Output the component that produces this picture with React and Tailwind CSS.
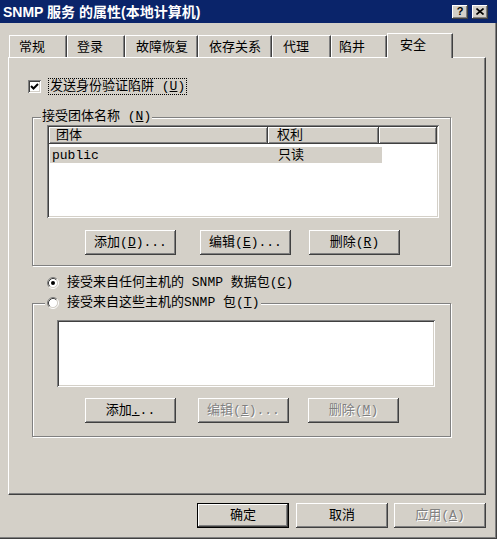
import React from 'react';

const FONT = "font-['Liberation_Mono','Noto_Sans_CJK_SC',monospace]";
const RAISED =
  'shadow-[inset_-1px_-1px_0_#404040,inset_1px_1px_0_#ffffff,inset_-2px_-2px_0_#808080]';
const SUNKEN =
  'shadow-[inset_1px_1px_0_#808080,inset_-1px_-1px_0_#ffffff,inset_2px_2px_0_#404040,inset_-2px_-2px_0_#d4d0c8]';
const ETCHED =
  'border border-[#808080] shadow-[inset_1px_1px_0_#ffffff,1px_1px_0_#ffffff]';

const U = ({ c }) => <span className="underline">{c}</span>;

const Btn = ({ children, def, disabled, className = '', w = 'w-[91px]' }) => (
  <div
    className={`${w} h-[25px] shrink-0 flex items-center justify-center bg-[#d4d0c8] leading-none ${RAISED} ${
      def ? 'border border-black' : ''
    } ${disabled ? 'text-[#808080] [text-shadow:1px_1px_0_#ffffff]' : ''} ${className}`}
  >
    {children}
  </div>
);

const Checkbox = () => (
  <div className={`w-[13px] h-[13px] bg-white shrink-0 flex items-center justify-center ${SUNKEN}`}>
    <svg width="9" height="9" viewBox="0 0 9 9">
      <path d="M1 4 L3.5 6.5 L8 2" stroke="#000" strokeWidth="2" fill="none" />
    </svg>
  </div>
);

const Radio = ({ checked }) => (
  <svg width="12" height="12" viewBox="0 0 12 12" className="shrink-0">
    <circle cx="6" cy="6" r="4.5" fill="#fff" />
    <path d="M2.11 9.89 A5.5 5.5 0 0 1 9.89 2.11" stroke="#808080" fill="none" />
    <path d="M9.89 2.11 A5.5 5.5 0 0 1 2.11 9.89" stroke="#ffffff" fill="none" />
    <path d="M2.82 9.18 A4.5 4.5 0 0 1 9.18 2.82" stroke="#404040" fill="none" />
    <path d="M9.18 2.82 A4.5 4.5 0 0 1 2.82 9.18" stroke="#d4d0c8" fill="none" />
    {checked && <circle cx="6" cy="6" r="2" fill="#000" />}
  </svg>
);

const tabs = [
  { label: '常规', w: 'w-[58px]', pl: 'pl-[9px]' },
  { label: '登录', w: 'w-[58px]', pl: 'pl-[9px]' },
  { label: '故障恢复', w: 'w-[73px]', pl: 'pl-[10px]' },
  { label: '依存关系', w: 'w-[74px]', pl: 'pl-[10px]' },
  { label: '代理', w: 'w-[59px]', pl: 'pl-[10px]' },
  { label: '陷井', w: 'w-[56px]', pl: 'pl-[7px]' },
];

const App = () => {
  return (
    <div
      className={`w-[497px] h-[539px] bg-[#d4d0c8] overflow-hidden flex flex-col text-[13px] text-black ${FONT} shadow-[inset_-1px_-1px_0_#404040,inset_-2px_-2px_0_#808080]`}
    >
      {/* Title bar */}
      <div className="h-[23px] shrink-0 bg-[#0a246a] flex items-center pl-[3px] pr-[9px]">
        <span className="text-white font-bold text-[14px] leading-none font-['Liberation_Sans','Noto_Sans_CJK_SC',sans-serif]">
          SNMP 服务 的属性(本地计算机)
        </span>
        <div className="ml-auto flex gap-[4px]">
          <div className={`w-[16px] h-[14px] bg-[#d4d0c8] flex items-center justify-center ${RAISED}`}>
            <span className="text-[11px] font-bold leading-none font-['Liberation_Sans',sans-serif]">?</span>
          </div>
          <div className={`w-[16px] h-[14px] bg-[#d4d0c8] flex items-center justify-center ${RAISED}`}>
            <svg width="8" height="7" viewBox="0 0 8 7">
              <path d="M0.5 0.5 L7.5 6.5 M7.5 0.5 L0.5 6.5" stroke="#000" strokeWidth="1.6" />
            </svg>
          </div>
        </div>
      </div>

      {/* Tabs */}
      <div className="mt-[10px] ml-[9px] h-[24px] flex items-end shrink-0">
        {tabs.map((t) => (
          <div
            key={t.label}
            className={`${t.w} ${t.pl} h-[22px] pt-[1px] flex items-center bg-[#d4d0c8] border-t border-l border-white border-r border-r-[#404040] shadow-[inset_-1px_0_0_#808080] leading-none`}
          >
            {t.label}
          </div>
        ))}
        <div className="relative z-10 w-[66px] pl-[12px] pb-[2px] h-[25px] -mb-px flex items-center bg-[#d4d0c8] border-t border-l border-white border-r border-r-[#404040] shadow-[inset_-1px_0_0_#808080] leading-none">
          安全
        </div>
      </div>

      {/* Panel */}
      <div className="ml-[8px] w-[478px] h-[438px] shrink-0 border border-white border-r-[#404040] border-b-[#404040] shadow-[inset_-1px_-1px_0_#808080] pl-[19px] flex flex-col">
        <div className="mt-[20px] h-[17px] flex items-center gap-[7px]">
          <Checkbox />
          <span className="border border-dotted border-black px-[1px] h-[17px] flex items-center leading-none">
            发送身份验证陷阱 (<U c="U" />)
          </span>
        </div>

        {/* Group 1 */}
        <div className={`relative mt-[22px] ml-[4px] w-[419px] h-[149px] pl-[14px] pt-[7px] flex flex-col ${ETCHED}`}>
          <span className="absolute left-[8px] -top-[9px] px-[1px] bg-[#d4d0c8] leading-[15px]">
            接受团体名称 (<U c="N" />)
          </span>
          <div className={`w-[392px] h-[93px] bg-white p-[2px] flex flex-col ${SUNKEN}`}>
            <div className="h-[17px] flex shrink-0 bg-[#d4d0c8]">
              <div className={`w-[219px] pl-[7px] flex items-center leading-none ${RAISED}`}>团体</div>
              <div className={`w-[111px] pl-[9px] flex items-center leading-none ${RAISED}`}>权利</div>
              <div className={`flex-1 ${RAISED}`} />
            </div>
            <div className="mt-[3px] ml-[1px] w-[332px] h-[16px] bg-[#d4d0c8] flex items-center leading-none">
              <span className="w-[218px] pl-[2px]">public</span>
              <span className="pl-[10px]">只读</span>
            </div>
          </div>
          <div className="mt-[12px] flex">
            <Btn className="ml-[38px]">
              添加(<U c="D" />)...
            </Btn>
            <Btn className="ml-[24px]">
              编辑(<U c="E" />)...
            </Btn>
            <Btn className="ml-[18px]">
              删除(<U c="R" />)
            </Btn>
          </div>
        </div>

        {/* Radio 1 */}
        <div className="mt-[8px] ml-[19px] h-[17px] flex items-center gap-[8px] leading-none">
          <Radio checked />
          <span>
            接受来自任何主机的 SNMP 数据包(<U c="C" />)
          </span>
        </div>

        {/* Group 2 */}
        <div className={`relative mt-[12px] ml-[4px] w-[419px] h-[134px] pl-[24px] pt-[16px] flex flex-col ${ETCHED}`}>
          <div className="absolute left-[12px] -top-[9px] px-[2px] h-[15px] bg-[#d4d0c8] flex items-center gap-[8px] leading-none">
            <Radio />
            <span>
              接受来自这些主机的SNMP 包(<U c="T" />)
            </span>
          </div>
          <div className={`w-[378px] h-[67px] bg-white ${SUNKEN}`} />
          <div className="mt-[11px] flex">
            <Btn className="ml-[28px]">
              添加<U c="." />..
            </Btn>
            <Btn className="ml-[22px]" disabled>
              编辑(<U c="I" />)...
            </Btn>
            <Btn className="ml-[19px]" disabled>
              删除(<U c="M" />)
            </Btn>
          </div>
        </div>
      </div>

      {/* Dialog buttons */}
      <div className="mt-[8px] flex justify-end pr-[11px]">
        <Btn w="w-[92px]" def>
          确定
        </Btn>
        <Btn w="w-[92px]" className="ml-[7px]">
          取消
        </Btn>
        <Btn w="w-[92px]" className="ml-[6px]" disabled>
          应用(<U c="A" />)
        </Btn>
      </div>
    </div>
  );
};

export default App;
